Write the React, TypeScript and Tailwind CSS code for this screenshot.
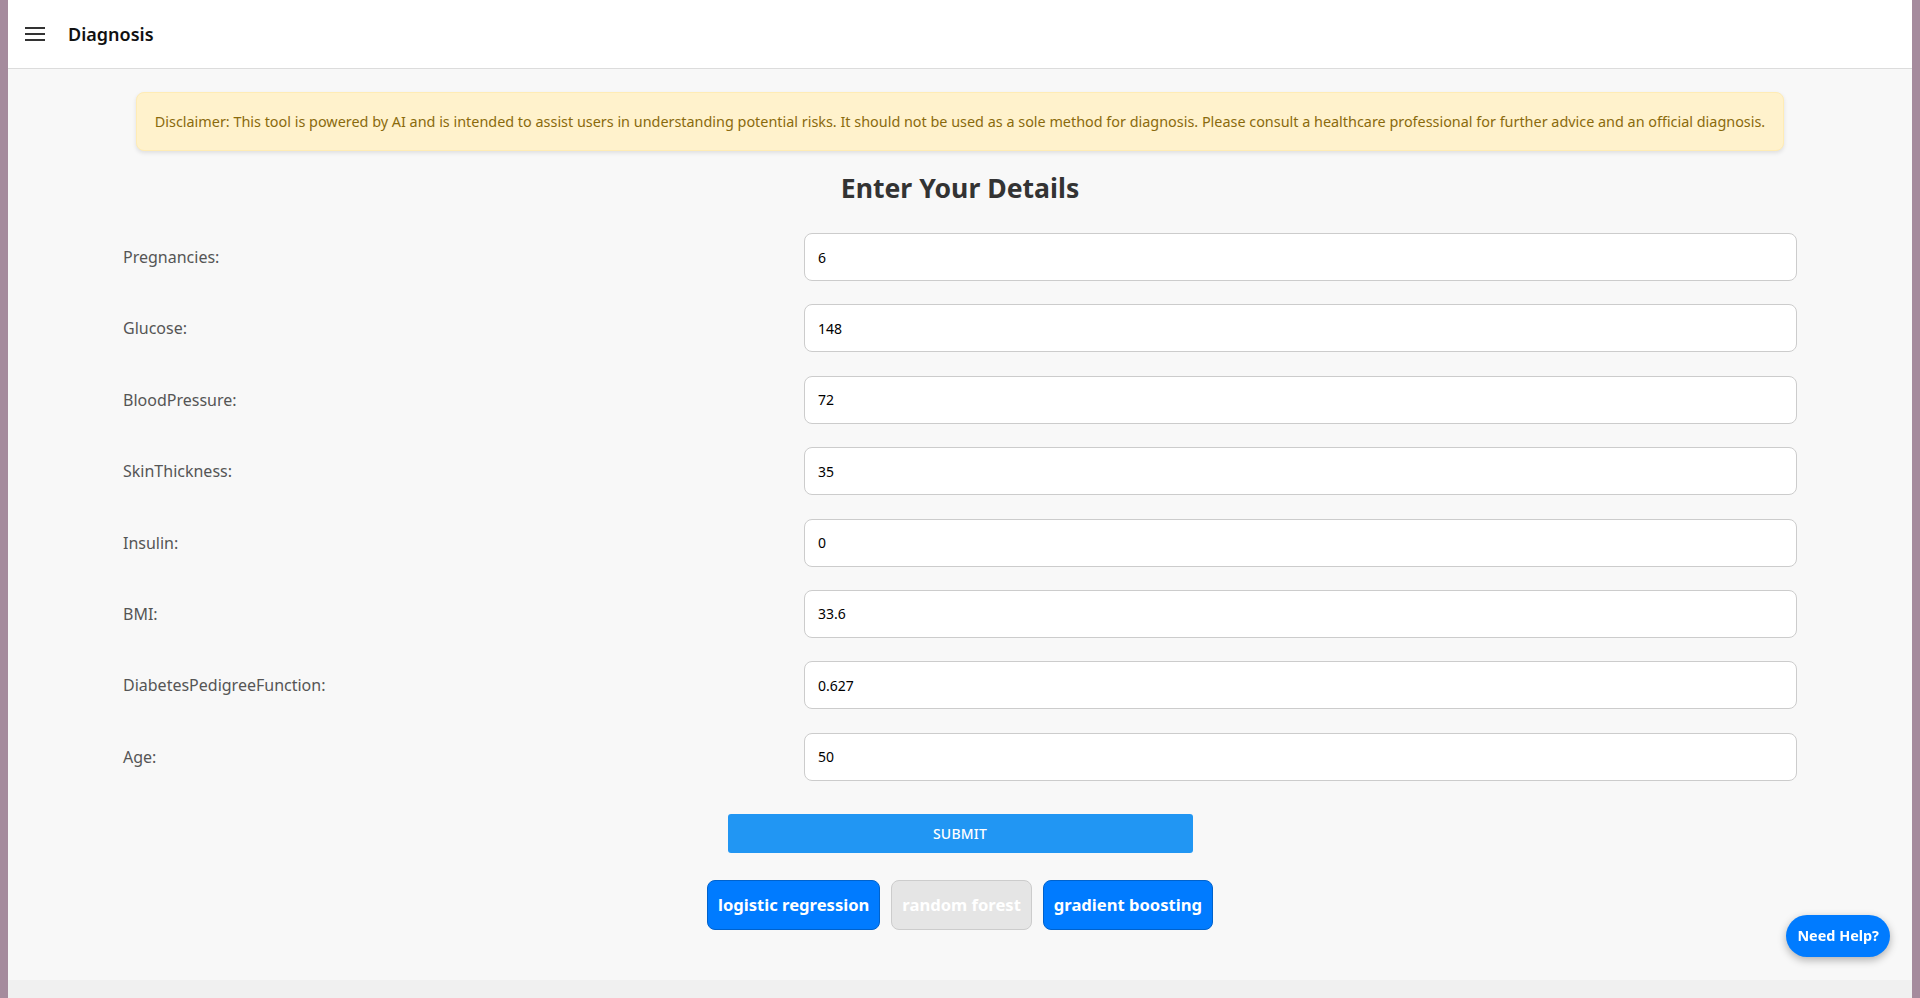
import React, { useState } from "react";

const fields = [
  { name: "Pregnancies", value: "6" },
  { name: "Glucose", value: "148" },
  { name: "BloodPressure", value: "72" },
  { name: "SkinThickness", value: "35" },
  { name: "Insulin", value: "0" },
  { name: "BMI", value: "33.6" },
  { name: "DiabetesPedigreeFunction", value: "0.627" },
  { name: "Age", value: "50" },
];

const App: React.FC = () => {
  const [form, setForm] = useState<Record<string, string>>(
    Object.fromEntries(fields.map((f) => [f.name, f.value]))
  );
  const [model, setModel] = useState("random forest");

  const handleChange = (e: React.ChangeEvent<HTMLInputElement>) => {
    const { name, value } = e.target;
    setForm((prev) => ({ ...prev, [name]: value }));
  };

  return (
    <div
      className="flex h-screen bg-[#a58b9d] px-2 overflow-hidden"
      style={{ fontFamily: '"Noto Sans", "Open Sans", sans-serif' }}
    >
      <div className="flex flex-col flex-1 bg-[#f8f8f8]">
        {/* Top bar */}
        <header className="h-[69px] shrink-0 bg-white border-b border-[#dcdcdc] flex items-center pl-[17px]">
          <button className="w-[20px] h-[20px] flex flex-col justify-center gap-[4px]">
            <span className="block h-[2px] w-[20px] bg-[#333]" />
            <span className="block h-[2px] w-[20px] bg-[#333]" />
            <span className="block h-[2px] w-[20px] bg-[#333]" />
          </button>
          <span className="ml-[23px] text-[18px] font-semibold text-[#111]">Diagnosis</span>
        </header>

        {/* Main */}
        <main className="flex-1 flex flex-col">
          <div className="mx-[128px] mt-[23px] h-[59px] flex items-center justify-center rounded-lg bg-[#fff2cc] border border-[#ffecb5] shadow-[0_2px_4px_rgba(0,0,0,0.1)] px-4">
            <p className="text-[14.4px] text-[#8a6a0c] whitespace-nowrap">
              Disclaimer: This tool is powered by AI and is intended to assist users in understanding potential risks. It should not be used as a sole method for diagnosis. Please consult a healthcare professional for further advice and an official diagnosis.
            </p>
          </div>

          <h2 className="mt-[20px] text-center text-[26.6px] leading-[34px] font-bold text-[#333]">
            Enter Your Details
          </h2>

          <form
            className="mx-[115px] mt-[28px] flex flex-col gap-[23.4px]"
            onSubmit={(e) => e.preventDefault()}
          >
            {fields.map((f) => (
              <div key={f.name} className="grid grid-cols-[681px_1fr] items-center">
                <label className="text-[16px] text-[#555]">{f.name}:</label>
                <input
                  name={f.name}
                  value={form[f.name]}
                  onChange={handleChange}
                  className="h-[48px] w-full rounded-lg border border-[#ccc] bg-white px-[13px] text-[14px] text-black outline-none"
                />
              </div>
            ))}

            <div className="flex justify-center mt-[10px]">
              <button
                type="submit"
                className="w-[465px] h-[39px] rounded-[3px] bg-[#2196f3] text-white text-[14px] font-medium tracking-[0.2px]"
              >
                SUBMIT
              </button>
            </div>
          </form>

          <div className="flex justify-center gap-[11px] mt-[27px]">
            {["logistic regression", "random forest", "gradient boosting"].map((m) => {
              const active = m === model;
              return (
                <button
                  key={m}
                  onClick={() => setModel(m)}
                  className={`h-[50px] px-[10px] rounded-lg border text-[16.6px] font-bold text-white ${
                    active ? "bg-[#e5e5e5] border-[#cccccc]" : "bg-[#007bff] border-[#0062cc]"
                  }`}
                >
                  {m}
                </button>
              );
            })}
          </div>
        </main>

        <div className="h-[18px] shrink-0 bg-[#f0f0f0]" />
      </div>

      <button className="fixed right-[30px] bottom-[41px] h-[42px] px-[11px] rounded-full bg-[#007bff] text-white text-[14.4px] font-bold shadow-[0_3px_8px_rgba(0,0,0,0.3)]">
        Need Help?
      </button>
    </div>
  );
};

export default App;
